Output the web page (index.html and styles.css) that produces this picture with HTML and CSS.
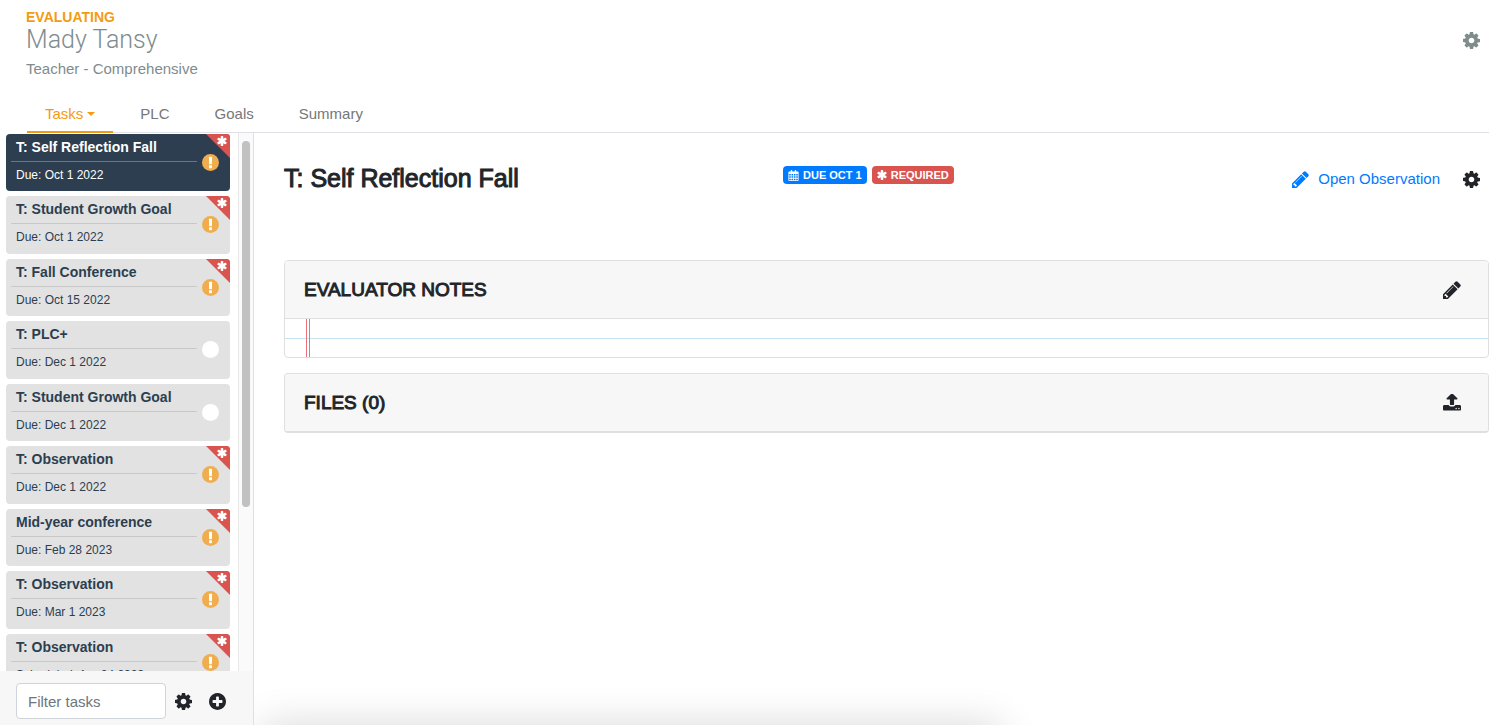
FILE: index.html
```html
<!DOCTYPE html>
<html lang="en">
<head>
<meta charset="utf-8">
<title>Evaluating Mady Tansy</title>
<link rel="stylesheet" href="styles.css">
</head>
<body>
<svg class="symbols" aria-hidden="true">
  <symbol id="cog" viewBox="128 128 1536 1536"><path d="M1152 896q0-106-75-181t-181-75-181 75-75 181 75 181 181 75 181-75 75-181zm512-109v222q0 12-8 23t-20 13l-185 28q-19 54-39 91 35 50 107 138 10 12 10 25t-9 23q-27 37-99 108t-94 71q-12 0-26-9l-138-108q-44 23-91 38-16 136-29 186-7 28-36 28h-222q-14 0-24.500-8.500t-11.500-21.500l-28-184q-49-16-90-37l-141 107q-10 9-25 9-14 0-25-11-126-114-165-168-7-10-7-23 0-12 8-23 15-21 51-66.500t54-70.500q-27-50-41-99l-183-27q-13-2-21-12.500t-8-23.500v-222q0-12 8-23t19-13l186-28q14-46 39-92-40-57-107-138-10-12-10-24 0-10 9-23 26-36 98.500-107.500t94.500-71.500q13 0 26 10l138 107q44-23 91-38 16-136 29-186 7-28 36-28h222q14 0 24.500 8.500t11.500 21.500l28 184q49 16 90 37l142-107q9-9 24-9 13 0 25 10 129 119 165 170 7 8 7 22 0 12-8 23-15 21-51 66.500t-54 70.500q26 50 41 98l183 28q13 2 21 12.500t8 23.500z"/></symbol>
  <symbol id="pencil" viewBox="128 128 1536 1536"><path d="M491 1536l91-91-235-235-91 91v107h128v128h107zm523-928q0-22-22-22-10 0-17 7l-542 542q-7 7-7 17 0 22 22 22 10 0 17-7l542-542q7-7 7-17zm-54-192l416 416-832 832h-416v-416zm683 96q0 53-37 90l-166 166-416-416 166-165q36-38 90-38 53 0 91 38l235 234q37 39 37 91z"/></symbol>
  <symbol id="plus" viewBox="128 128 1536 1536"><path d="M1344 960v-128q0-26-19-45t-45-19h-256v-256q0-26-19-45t-45-19h-128q-26 0-45 19t-19 45v256h-256q-26 0-45 19t-19 45v128q0 26 19 45t45 19h256v256q0 26 19 45t45 19h128q26 0 45-19t19-45v-256h256q26 0 45-19t19-45zm320-64q0 209-103 385.500t-279.500 279.500-385.500 103-385.500-103-279.500-279.500-103-385.500 103-385.500 279.500-279.500 385.500-103 385.500 103 279.500 279.500 103 385.500z"/></symbol>
  <symbol id="alert" viewBox="128 128 1536 1536"><circle cx="896" cy="896" r="768"/><path fill="#fff" d="M1024 1375v-190q0-14-9-23.500t-22-9.500h-192q-13 0-23 10t-10 23v190q0 13 10 23t23 10h192q13 0 22-9.500t9-23.500zm-2-344l18-621q0-12-10-18-10-8-24-8h-220q-14 0-24 8-10 6-10 18l17 621q0 10 10 17.500t24 7.500h185q14 0 23.500-7.500t10.500-17.500z"/></symbol>
  <symbol id="dot" viewBox="0 0 16 16"><circle cx="8" cy="8" r="8"/></symbol>
  <symbol id="asterisk" viewBox="128 128 1536 1536"><path d="M1546 1050q46 26 59.500 77.500t-12.500 97.500l-64 110q-26 46-77.500 59.500t-97.500-12.500l-266-153v307q0 52-38 90t-90 38h-128q-52 0-90-38t-38-90v-307l-266 153q-46 26-97.500 12.500t-77.500-59.500l-64-110q-26-46-12.500-97.500t59.500-77.500l266-154-266-154q-46-26-59.500-77.500t12.500-97.500l64-110q26-46 77.500-59.500t97.500 12.500l266 153v-307q0-52 38-90t90-38h128q52 0 90 38t38 90v307l266-153q46-26 97.500-12.500t77.500 59.500l64 110q26 46 12.500 97.500t-59.500 77.500l-266 154z"/></symbol>
  <symbol id="calendar" viewBox="0 0 13 14"><path fill-rule="evenodd" d="M1 2h2V1q0-1 1-1t1 1v1h3V1q0-1 1-1t1 1v1h2q1 0 1 1v10q0 1-1 1H1q-1 0-1-1V3q0-1 1-1zM1 5v2h2V5zM4 5v2h2V5zM7 5v2h2V5zM10 5v2h2V5zM1 8v2h2V8zM4 8v2h2V8zM7 8v2h2V8zM10 8v2h2V8zM1 11v2h2v-2zM4 11v2h2v-2zM7 11v2h2v-2zM10 11v2h2v-2z"/></symbol>
  <symbol id="upload" viewBox="64 128 1664 1664"><path d="M1344 1472q0-26-19-45t-45-19-45 19-19 45 19 45 45 19 45-19 19-45zm256 0q0-26-19-45t-45-19-45 19-19 45 19 45 45 19 45-19 19-45zm128-224v320q0 40-28 68t-68 28h-1472q-40 0-68-28t-28-68v-320q0-40 28-68t68-28h427q21 56 70.500 92t110.500 36h256q61 0 110.500-36t70.500-92h427q40 0 68 28t28 68zm-325-648q-17 40-59 40h-256v448q0 26-19 45t-45 19h-256q-26 0-45-19t-19-45v-448h-256q-42 0-59-40-17-39 14-69l448-448q18-19 45-19t45 19l448 448q31 30 14 69z"/></symbol>
</svg>
<div class="page">
  <header class="header">
    <div>
      <div class="eyebrow">EVALUATING</div>
      <h1 class="person">Mady Tansy</h1>
      <div class="role">Teacher - Comprehensive</div>
    </div>
    <button class="icon-button muted" type="button" aria-label="Evaluation settings"><svg class="icon"><use href="#cog"/></svg></button>
  </header>
  <nav class="tabs">
    <a class="tab active" href="#tasks">Tasks<span class="caret"></span></a>
    <a class="tab" href="#plc">PLC</a>
    <a class="tab" href="#goals">Goals</a>
    <a class="tab" href="#summary">Summary</a>
  </nav>
  <div class="columns">
    <aside class="sidebar">
      <div class="scroller">
        <ul class="tasks">
          <li class="task selected required"><div class="task-title">T: Self Reflection Fall</div><div class="task-date">Due: Oct 1 2022</div><svg class="star"><use href="#asterisk"/></svg><svg class="status"><use href="#alert"/></svg></li>
          <li class="task required"><div class="task-title">T: Student Growth Goal</div><div class="task-date">Due: Oct 1 2022</div><svg class="star"><use href="#asterisk"/></svg><svg class="status"><use href="#alert"/></svg></li>
          <li class="task required"><div class="task-title">T: Fall Conference</div><div class="task-date">Due: Oct 15 2022</div><svg class="star"><use href="#asterisk"/></svg><svg class="status"><use href="#alert"/></svg></li>
          <li class="task"><div class="task-title">T: PLC+</div><div class="task-date">Due: Dec 1 2022</div><svg class="status empty"><use href="#dot"/></svg></li>
          <li class="task"><div class="task-title">T: Student Growth Goal</div><div class="task-date">Due: Dec 1 2022</div><svg class="status empty"><use href="#dot"/></svg></li>
          <li class="task required"><div class="task-title">T: Observation</div><div class="task-date">Due: Dec 1 2022</div><svg class="star"><use href="#asterisk"/></svg><svg class="status"><use href="#alert"/></svg></li>
          <li class="task required"><div class="task-title">Mid-year conference</div><div class="task-date">Due: Feb 28 2023</div><svg class="star"><use href="#asterisk"/></svg><svg class="status"><use href="#alert"/></svg></li>
          <li class="task required"><div class="task-title">T: Observation</div><div class="task-date">Due: Mar 1 2023</div><svg class="star"><use href="#asterisk"/></svg><svg class="status"><use href="#alert"/></svg></li>
          <li class="task required"><div class="task-title">T: Observation</div><div class="task-date">Scheduled: Apr 24 2023</div><svg class="star"><use href="#asterisk"/></svg><svg class="status"><use href="#alert"/></svg></li>
        </ul>
        <div class="track"><div class="thumb"></div></div>
      </div>
      <div class="filter">
        <input class="filter-input" type="text" placeholder="Filter tasks" aria-label="Filter tasks">
        <button class="icon-button" type="button" aria-label="Task settings"><svg class="icon"><use href="#cog"/></svg></button>
        <button class="icon-button" type="button" aria-label="Add task"><svg class="icon"><use href="#plus"/></svg></button>
      </div>
    </aside>
    <main class="main">
      <div class="title-row">
        <h2 class="title">T: Self Reflection Fall</h2>
        <div class="badges">
          <span class="badge due"><svg class="badge-icon"><use href="#calendar"/></svg>DUE OCT 1</span>
          <span class="badge req"><svg class="badge-icon"><use href="#asterisk"/></svg>REQUIRED</span>
        </div>
        <div class="actions">
          <a class="open" href="#observation"><svg class="icon"><use href="#pencil"/></svg>Open Observation</a>
          <button class="icon-button" type="button" aria-label="Observation settings"><svg class="icon"><use href="#cog"/></svg></button>
        </div>
      </div>
      <section class="card">
        <div class="card-head"><h3 class="card-title">EVALUATOR NOTES</h3><button class="icon-button" type="button" aria-label="Edit notes"><svg class="icon"><use href="#pencil"/></svg></button></div>
        <div class="paper"></div>
      </section>
      <section class="card files">
        <div class="card-head"><h3 class="card-title">FILES (0)</h3><button class="icon-button" type="button" aria-label="Upload file"><svg class="icon"><use href="#upload"/></svg></button></div>
      </section>
      <div class="drawer"></div>
    </main>
  </div>
</div>
</body>
</html>
```
FILE: styles.css
```css
* { box-sizing: border-box; }
body {
  margin: 0;
  font-family: "Liberation Sans", Arial, sans-serif;
  font-size: 15px;
  line-height: 20px;
  color: #212529;
  background: #fff;
}
h1, h2, h3, ul { margin: 0; padding: 0; }
a { text-decoration: none; }
.symbols { display: none; }
.page { height: 100vh; display: flex; flex-direction: column; }
.icon { display: block; width: 17px; height: 17px; fill: currentColor; }
.icon-button { padding: 0; border: 0; background: none; color: #212529; }
.header { display: flex; justify-content: space-between; align-items: flex-start; padding: 7px 24px 0 26px; }
.eyebrow { font-size: 14px; font-weight: 700; color: #f39c12; }
.person { font-family: Roboto, sans-serif; font-size: 25px; line-height: 26px; font-weight: 300; color: #7f8c8d; }
.role { color: #7f8c8d; padding: 6px 0 0; }
.muted { margin-top: 25px; color: #7f8c8d; }
.tabs { display: flex; gap: 9px; margin: 16px 15px 0 27px; border-bottom: 1px solid #dee2e6; }
.tab { display: flex; align-items: center; gap: 4px; padding: 9px 18px 7px; margin-bottom: -1px; border-bottom: 2px solid transparent; color: #777; }
.tab.active { color: #f39c12; border-color: #f39c12; }
.caret { border: 4px solid transparent; border-top-color: currentColor; border-bottom: 0; }
.columns { flex: 1; min-height: 0; display: flex; }
.sidebar { width: 254px; flex: none; display: flex; flex-direction: column; border-right: 1px solid #e0e0e0; }
.scroller { flex: 1; min-height: 0; display: flex; overflow: hidden; }
.tasks { flex: 1; list-style: none; display: flex; flex-direction: column; gap: 5px; padding: 1px 8px 0 6px; }
.task { position: relative; flex: none; padding: 3px 33px 8px 5px; border-radius: 4px; background: #e2e2e2; color: #2c3e50; overflow: hidden; }
.task-title { padding: 0 5px 4px; font-size: 14px; line-height: 20px; font-weight: 700; border-bottom: 1px solid #c8c8c8; white-space: nowrap; }
.task-date { padding: 5px 5px 0; font-size: 12px; line-height: 1.37; }
.task.selected { background: #2c3e50; color: #fff; }
.selected .task-title { border-color: #4f7ca8; }
.required::before { content: ""; position: absolute; top: 0; right: 0; border: 12px solid #d9534f; border-left-color: transparent; border-bottom-color: transparent; }
.star { position: absolute; top: 2px; right: 3px; width: 10px; height: 10px; fill: #fff; }
.status { position: absolute; top: 20px; right: 11px; width: 17px; height: 17px; fill: #f0ad4e; }
.status.empty { fill: #fff; }
.track { width: 15px; padding: 8px 3px 0; background: #fafafa; border-left: 1px solid #e8e8e8; }
.thumb { height: 69%; border-radius: 4px; background: #c1c1c1; }
.filter { display: flex; align-items: center; gap: 17px; padding: 12px 16px 6px; background: #f7f7f7; }
.filter-input { width: 150px; height: 36px; margin-right: -8px; padding: 0 11px; border: 1px solid #ced4da; border-radius: 4px; background: #fff; font: inherit; color: #495057; }
.filter-input::placeholder { color: #6c757d; opacity: 1; }
.main { position: relative; flex: 1; min-width: 0; padding: 30px 15px 0 30px; overflow: hidden; }
.title-row { display: grid; grid-template-columns: 499px 1fr auto; align-items: start; padding-bottom: 67px; }
.title { font-size: 25px; line-height: 30px; font-weight: 400; -webkit-text-stroke: 1px currentColor; }
.badges { display: flex; gap: 5px; padding-top: 3px; }
.badge { display: flex; align-items: center; gap: 4px; height: 18px; padding: 0 5px; border-radius: 4px; font-size: 11px; font-weight: 700; color: #fff; }
.due { background: #007bff; }
.req { background: #d9534f; }
.badge-icon { width: 11px; height: 11px; fill: #fff; }
.req .badge-icon { width: 10px; height: 10px; }
.actions { display: flex; align-items: center; gap: 23px; padding: 6px 9px 0 0; }
.open { display: flex; align-items: center; gap: 9px; color: #007bff; }
.card { border: 1px solid #dfdfdf; border-radius: 4px; margin-bottom: 15px; overflow: hidden; }
.card-head { display: flex; align-items: center; justify-content: space-between; padding: 17px 27px 16px 19px; background: #f7f7f7; }
.card-title { font-size: 19px; line-height: 24px; font-weight: 400; -webkit-text-stroke: 1px currentColor; }
.card .icon { width: 18px; height: 18px; }
.paper { height: 39px; border-top: 1px solid #dfdfdf; background: linear-gradient(90deg, transparent 21px, #e8707a 21px 22px, transparent 22px 24px, #e8707a 24px 25px, transparent 25px), linear-gradient(transparent 19px, #c5e3f0 19px 20px, transparent 20px); }
.files { border-bottom-width: 2px; }
.drawer { position: absolute; left: 8px; top: 100%; width: 59%; height: 40px; box-shadow: 0 0 40px rgba(0, 0, 0, 0.16); }
```
